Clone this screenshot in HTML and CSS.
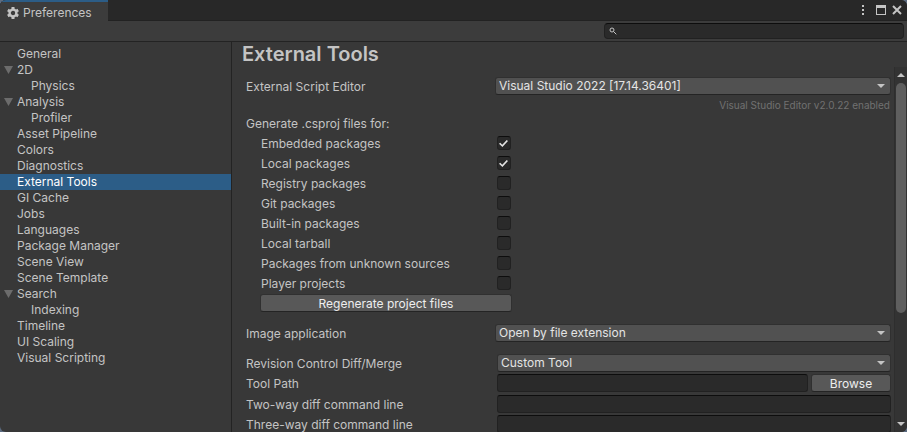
FILE: index.html
```html
<!DOCTYPE html>
<html lang="en">
<head>
<meta charset="utf-8">
<title>Preferences</title>
<link rel="stylesheet" href="styles.css">
</head>
<body>
<div class="window">
  <header class="titlebar">
    <div class="tab">
      <svg class="gear" viewBox="0 0 12 12" aria-hidden="true"><circle cx="6" cy="6" r="3.400" stroke-width="2.400"/><path stroke-width="3" d="M6 0v2.500M6 9.500V12M.8 3l2.200 1.200M9 7.800L11.200 9M.8 9L3 7.800M9 4.200L11.200 3"/></svg>
      <span>Preferences</span>
    </div>
    <div class="window-buttons">
      <button type="button" aria-label="More"><svg viewBox="0 0 12 12"><path d="M5 1h2v2H5zM5 5h2v2H5zM5 9h2v2H5z"/></svg></button>
      <button type="button" aria-label="Maximize"><svg viewBox="0 0 12 12"><path fill-rule="evenodd" d="M1 1h10v10H1zM2 4v6h8V4z"/></svg></button>
      <button type="button" aria-label="Close"><svg viewBox="0 0 12 12"><path class="stroke" d="M2 2l8 8M10 2l-8 8"/></svg></button>
    </div>
  </header>
  <div class="toolbar">
    <label class="search">
      <svg viewBox="0 0 8 8" aria-hidden="true"><circle cx="3" cy="3" r="2"/><path d="M4.500 4.500L7.300 7.300"/></svg>
      <input type="text" aria-label="Search">
    </label>
  </div>
  <div class="panes">
    <nav class="sidebar">
      <a href="#">General</a>
      <a href="#" class="open">2D</a>
      <a href="#" class="child">Physics</a>
      <a href="#" class="open">Analysis</a>
      <a href="#" class="child">Profiler</a>
      <a href="#">Asset Pipeline</a>
      <a href="#">Colors</a>
      <a href="#">Diagnostics</a>
      <a href="#" class="selected">External Tools</a>
      <a href="#">GI Cache</a>
      <a href="#">Jobs</a>
      <a href="#">Languages</a>
      <a href="#">Package Manager</a>
      <a href="#">Scene View</a>
      <a href="#">Scene Template</a>
      <a href="#" class="open">Search</a>
      <a href="#" class="child">Indexing</a>
      <a href="#">Timeline</a>
      <a href="#">UI Scaling</a>
      <a href="#">Visual Scripting</a>
    </nav>
    <main class="main">
      <h1>External Tools</h1>
      <div class="scroll-area">
        <form class="settings">
          <div class="row">
            <label for="editor">External Script Editor</label>
            <span class="select"><select id="editor"><option>Visual Studio 2022 [17.14.36401]</option></select></span>
          </div>
          <p class="hint">Visual Studio Editor v2.0.22 enabled</p>
          <fieldset>
            <legend>Generate .csproj files for:</legend>
            <div class="row"><label for="c1">Embedded packages</label><input id="c1" type="checkbox" checked></div>
            <div class="row"><label for="c2">Local packages</label><input id="c2" type="checkbox" checked></div>
            <div class="row"><label for="c3">Registry packages</label><input id="c3" type="checkbox"></div>
            <div class="row"><label for="c4">Git packages</label><input id="c4" type="checkbox"></div>
            <div class="row"><label for="c5">Built-in packages</label><input id="c5" type="checkbox"></div>
            <div class="row"><label for="c6">Local tarball</label><input id="c6" type="checkbox"></div>
            <div class="row"><label for="c7">Packages from unknown sources</label><input id="c7" type="checkbox"></div>
            <div class="row"><label for="c8">Player projects</label><input id="c8" type="checkbox"></div>
            <button type="button" class="button regenerate">Regenerate project files</button>
          </fieldset>
          <div class="row section">
            <label for="image">Image application</label>
            <span class="select"><select id="image"><option>Open by file extension</option></select></span>
          </div>
          <div class="diff section">
            <div class="row">
              <label for="diff">Revision Control Diff/Merge</label>
              <span class="select"><select id="diff"><option>Custom Tool</option></select></span>
            </div>
            <div class="row">
              <label for="path">Tool Path</label>
              <input id="path" class="text" type="text">
              <button type="button" class="button browse">Browse</button>
            </div>
            <div class="row command">
              <label for="two">Two-way diff command line</label>
              <input id="two" class="text" type="text">
            </div>
            <div class="row">
              <label for="three">Three-way diff command line</label>
              <input id="three" class="text" type="text">
            </div>
          </div>
        </form>
        <div class="scrollbar" aria-hidden="true">
          <svg viewBox="0 0 8 4"><path d="M4 0l4 4H0z"/></svg>
          <div class="track"><div class="thumb"></div></div>
          <svg viewBox="0 0 8 4"><path d="M0 0h8L4 4z"/></svg>
        </div>
      </div>
    </main>
  </div>
</div>
</body>
</html>
```
FILE: styles.css
```css
* { box-sizing: border-box; }

body {
  margin: 0;
  background: #5c6b80;
  color: #c4c4c4;
  font: 12px/16px Inter, sans-serif;
}

button, input, select { font: inherit; color: inherit; margin: 0; }

.window {
  display: flex;
  flex-direction: column;
  height: 100vh;
  overflow: hidden;
  background: #383838;
  border-radius: 6px;
}

.titlebar {
  display: flex;
  justify-content: space-between;
  flex: none;
  height: 21px;
  background: #282828;
  box-shadow: inset 0 -1px #222;
}

.tab {
  display: flex;
  align-items: center;
  gap: 4px;
  padding: 2px 16px 0 7px;
  background: #3c3c3c;
  border-top: 2px solid #2c5d87;
}

.tab span { padding-top: 1px; }
.gear { width: 12px; height: 12px; fill: none; stroke: #c4c4c4; }

.window-buttons {
  display: flex;
  align-items: center;
  gap: 4px;
  padding: 0 4px 1px 0;
}

.window-buttons button {
  display: flex;
  width: 12px;
  padding: 0;
  border: 0;
  background: none;
}

.window-buttons svg { width: 12px; height: 12px; fill: #c4c4c4; }
.window-buttons .stroke { stroke: #c4c4c4; stroke-width: 2; }
.window-buttons button:first-child { margin-right: 2px; }

.toolbar {
  display: flex;
  justify-content: flex-end;
  flex: none;
  height: 21px;
  padding: 2px 3px;
  background: #3c3c3c;
  border-bottom: 1px solid #232323;
}

.search {
  display: flex;
  align-items: center;
  gap: 6px;
  width: 300px;
  height: 16px;
  padding: 0 4px;
  background: #2a2a2a;
  border: 1px solid #212121;
  border-top-color: #0d0d0d;
  border-radius: 4px;
}

.search svg { width: 8px; height: 8px; fill: none; stroke: #c4c4c4; stroke-width: 1; }
.search input { flex: 1; height: 14px; padding: 0; border: 0; background: none; outline: 0; }

.panes { display: flex; flex: 1; min-height: 0; }

.sidebar {
  flex: none;
  width: 232px;
  padding-top: 4px;
  border-right: 1px solid #232323;
}

.sidebar a {
  display: flex;
  align-items: center;
  height: 16px;
  padding-left: 17px;
  color: inherit;
  text-decoration: none;
}

.sidebar .child { padding-left: 31px; }
.sidebar .selected { background: #2c5d87; color: #fff; }
.sidebar .open { padding-left: 4px; gap: 4px; }

.sidebar .open::before {
  content: "";
  width: 9px;
  height: 8px;
  background: #6c6c6c;
  clip-path: polygon(0 0, 100% 0, 50% 100%);
}

.main { display: flex; flex: 1; flex-direction: column; min-width: 0; }

h1 {
  flex: none;
  margin: 0;
  padding-left: 10px;
  font-size: 20px;
  line-height: 25px;
  font-weight: 600;
}

.scroll-area { display: flex; flex: 1; min-height: 0; }

.settings {
  display: flex;
  flex: 1;
  flex-direction: column;
  gap: 2px;
  min-width: 0;
  padding: 10px 3px 0 14px;
  overflow: hidden;
}

.row { display: flex; flex: none; align-items: center; height: 18px; }
.row label { flex: none; width: 249px; padding-top: 1px; }
.section { margin-top: 10px; }

.select {
  display: flex;
  position: relative;
  flex: 1;
  min-width: 0;
}

.select::after {
  content: "";
  position: absolute;
  top: 7px;
  right: 6px;
  width: 8px;
  height: 4px;
  background: #c4c4c4;
  clip-path: polygon(0 0, 100% 0, 50% 100%);
  pointer-events: none;
}

select {
  appearance: none;
  width: 100%;
  height: 18px;
  padding: 0 16px 0 3px;
  background: #515151;
  border: 1px solid #303030;
  border-bottom-color: #242424;
  border-radius: 3px;
  color: #e4e4e4;
}

.hint {
  margin: 0;
  padding: 1px 1px 0 0;
  color: #717171;
  font-size: 10px;
  line-height: 14px;
  text-align: right;
}

fieldset {
  display: flex;
  flex-direction: column;
  gap: 2px;
  margin: 0;
  padding: 2px 0 0 15px;
  border: 0;
}

legend { height: 18px; margin-left: -15px; padding: 2px 0 0; }
fieldset .row label { width: 236px; }

input[type="checkbox"] {
  appearance: none;
  width: 14px;
  height: 14px;
  background: #2a2a2a;
  border: 1px solid #212121;
  border-top-color: #0d0d0d;
  border-radius: 3px;
}

input[type="checkbox"]:checked::before {
  content: "";
  display: block;
  width: 9px;
  height: 7px;
  margin: 3px 1px;
  background: #e4e4e4;
  clip-path: polygon(0 52%, 14% 38%, 36% 68%, 86% 0, 100% 14%, 38% 100%);
}

.button {
  height: 18px;
  padding: 1px 0 0;
  background: #585858;
  border: 1px solid #303030;
  border-bottom-color: #242424;
  border-radius: 3px;
  color: #eee;
  line-height: 16px;
}

.regenerate { width: 252px; margin-left: -1px; }
.browse { width: 80px; margin-left: 3px; }

.diff { display: flex; flex-direction: column; gap: 2px; }
.diff .row label { width: 251px; }
.command { margin-top: 1px; }

.text {
  flex: 1;
  min-width: 0;
  height: 18px;
  padding: 0 3px;
  background: #2a2a2a;
  border: 1px solid #212121;
  border-top-color: #0d0d0d;
  border-radius: 3px;
}

.scrollbar {
  display: flex;
  flex: none;
  flex-direction: column;
  align-items: center;
  gap: 6px;
  width: 13px;
  padding: 6px 0;
  background: #333;
  border-left: 1px solid #2e2e2e;
}

.scrollbar svg { width: 8px; height: 4px; fill: #c4c4c4; }
.track { flex: 1; width: 10px; }
.thumb { height: 69%; background: #5f5f5f; border-radius: 5px; }
```
